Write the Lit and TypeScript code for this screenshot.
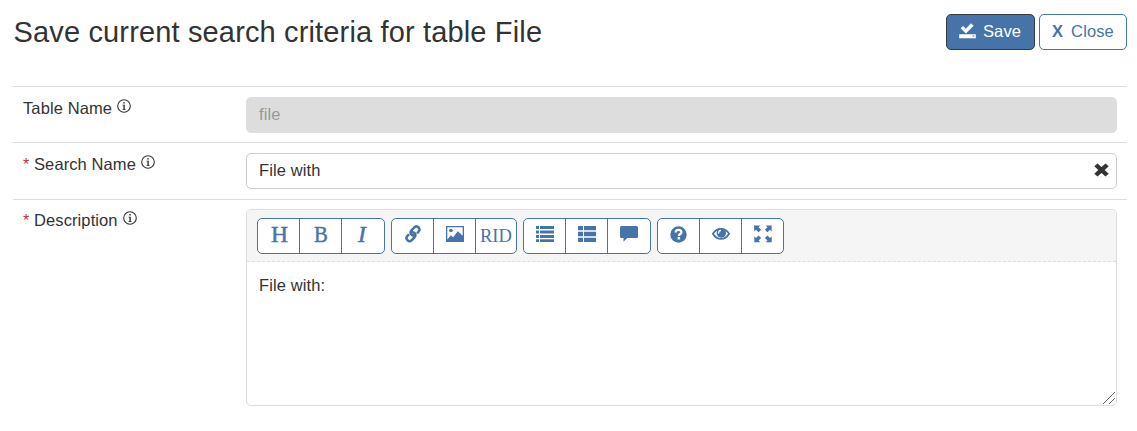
import { LitElement, html, css, svg } from "lit";
import { customElement } from "lit/decorators.js";

const icon = (w: number, h: number, body: unknown) =>
  html`<svg width=${w} height=${h} viewBox="0 0 ${w} ${h}" fill="currentColor">${body}</svg>`;

const icons = {
  save: icon(17, 16, svg`<path d="M1.6 5.300 4.100 3 6.900 5.700 12 .2 14.600 2.800 6.900 10.600Z"/><path fill-rule="evenodd" d="M.2 11.200h16.600v4H.2zM13.600 12.600v1h1.800v-1z"/>`),
  link: icon(18, 18, svg`<g fill="none" stroke="currentColor" stroke-width="2.500" stroke-linecap="round" stroke-linejoin="round"><path d="M10.800 10.500C8.600 10.700 6.600 9.600 6.500 7.600C6.500 6.700 6.900 6.100 7.500 5.400L10.200 2.500C11.500 1.200 13.200 1.200 14.500 2.500C15.800 3.800 15.700 5.400 14.500 6.800L13.700 7.600"/><path d="M7.500 7.200C9.700 7 11.400 8.200 11.500 10C11.500 10.900 11.100 11.600 10.500 12.300L7.800 15.100C6.500 16.400 4.700 16.400 3.400 15.100C2.100 13.800 2.200 12.200 3.400 10.900L4.300 10"/></g>`),
  image: icon(18, 16, svg`<path fill-rule="evenodd" d="M0 0h18v16H0zM1.300 1.300v12.200l3.600-4.300 2.200 2 4.700-6 4.900 4.500V1.300z"/><circle cx="4.900" cy="4.500" r="1.800"/>`),
  list: icon(18, 16, svg`<path d="M0 0h3v3H0zM4 0h14v3H4zM0 4.500h3v3H0zM4 4.500h14v3H4zM0 9h3v3H0zM4 9h14v3H4zM0 13.300h3v2.700H0zM4 13.300h14v2.700H4z"/>`),
  blocks: icon(18, 16, svg`<path d="M0 0h5v4.300H0zM6 0h12v4.300H6zM0 5.800h5v4.400H0zM6 5.800h12v4.400H6zM0 11.700h5V16H0zM6 11.700h12V16H6z"/>`),
  comment: icon(18, 16, svg`<path d="M1.500 0h15Q18 0 18 1.500v9q0 1.500-1.500 1.500H7.200L3.500 15.800V12h-2Q0 12 0 10.500v-9Q0 0 1.500 0z"/>`),
  help: icon(17, 17, svg`<circle cx="8.500" cy="8.500" r="8.200"/><path d="M5.700 6.500C5.700 4.600 6.900 3.800 8.500 3.800S11.400 4.800 11.400 6.300C11.400 8.100 8.900 8 8.900 10" fill="none" stroke="#fff" stroke-width="2.300"/><path fill="#fff" d="M7.600 11h2.500v2.400H7.600z"/>`),
  eye: icon(18, 14, svg`<path d="M.9 6.800C5 .2 13 .2 17.100 6.800 13 13.600 5 13.600.9 6.800Z" fill="none" stroke="currentColor" stroke-width="1.800"/><circle cx="9.300" cy="6" r="4.700"/><path d="M6.500 6.400C6.500 4.700 7.400 3.600 9 3.400" fill="none" stroke="#fff" stroke-width="1.300"/>`),
  expand: icon(18, 18, svg`<path d="M0 .5h6.300L4.600 2.200 7.200 4.800 4.600 7.200 2 4.700.3 6.400zM17.700.5v6L16 4.700 13.400 7.200 10.900 4.800 13.500 2.200 11.700.5zM.3 17.300v-6L2 13l2.600-2.500L7.200 13l-2.600 2.600 1.700 1.700zM17.700 17.300v-6L16 13l-2.600-2.500L10.900 13l2.600 2.600-1.800 1.700z"/>`),
  info: icon(14, 14, svg`<circle cx="7" cy="7" r="6.300" fill="none" stroke="currentColor" stroke-width="1.100"/><path d="M6.300 3h1.500v1.500H6.300zM5.500 5.700h2.300v4.600h.9v.8H5.500v-.8h.9V6.500h-.9z"/>`),
  clear: icon(15, 14, svg`<path d="M3.500.4 7.500 4 11.500.4 14.700 3.300 10.700 7 14.700 10.700 11.500 13.600 7.500 10 3.500 13.600.3 10.700 4.300 7 .3 3.300Z"/>`),
};

@customElement("app-root")
export class AppRoot extends LitElement {
  static styles = css`
    :host { display: block; height: 431px; overflow: hidden; background: #fff; color: #333;
      font: 16.500px/24px "Liberation Sans", Arial, sans-serif; letter-spacing: 0.100px; }
    * { box-sizing: border-box; }
    svg { display: block; flex: none; }
    .header { display: flex; height: 86px; padding: 14px 10px 0 13px; align-items: flex-start; }
    h1 { margin: 0; flex: 1; font-size: 29px; line-height: 36px; font-weight: 400; letter-spacing: 0.150px; padding-left: 0.500px; }
    .actions { display: flex; gap: 4px; }
    .btn { height: 36px; border: 1px solid #4674a8; border-radius: 5px; display: flex; padding: 0 0 2px 12px;
      align-items: center; font: inherit; background: #fff; color: #4674a8; }
    .save { width: 89px; background: #4674a8; border-color: #333b45; color: #fff; gap: 7px; }
    .close { width: 88px; gap: 8px; }
    .row { display: grid; grid-template-columns: 233px 871px; height: 56px; border-top: 1px solid #ddd;
      margin: 0 10px 0 13px; padding-top: 10px; }
    .row.middle { height: 57px; }
    .row.last { height: 220px; padding-top: 9px; }
    .label { display: flex; padding-left: 10px; height: 24px; line-height: 22px; }
    .label svg { margin: 2px 0 0 5px; }
    .req { color: #b5373b; width: 11px; font-size: 16px; line-height: 24px; }
    .field { height: 36px; border: 1px solid #ccc; border-radius: 5px; padding: 0 7px 2px 12px; display: flex;
      align-items: center; justify-content: space-between; }
    .disabled { background: #ddd; border-color: #ddd; color: #999; }
    .editor { height: 197px; border: 1px solid #ddd; border-radius: 5px; display: flex; flex-direction: column; overflow: hidden; }
    .toolbar { height: 52px; background: #f5f5f5; border-bottom: 1px dashed #ddd; padding: 8px 0 0 10px;
      display: flex; gap: 6px; flex: none; }
    .group { display: grid; grid-template-columns: 42px 42px 1fr; height: 36px; border: 1px solid #4674a8;
      border-radius: 5px; background: #fff; overflow: hidden; width: 128px; }
    .g2 { width: 126px; }
    .g4 { width: 127px; }
    .tool { display: flex; align-items: center; justify-content: center; color: #4674a8; padding: 0 1px 4px 1px;
      border-right: 1px solid #4674a8; font-family: "Liberation Serif", serif; }
    .tool:last-child { border-right: 0; }
    .letter { font-size: 23.500px; padding: 0 0 5px 2px; }
    .b { -webkit-text-stroke: 0.500px #4674a8; }
    .narrow { padding-left: 0; }
    .narrow span { display: block; transform: scaleX(0.880); }
    .group .i { font-style: italic; -webkit-text-stroke: 0.500px #4674a8; padding: 0 2px 5px 0; }
    .group .rid { font-size: 18.500px; padding: 0; }
    .text { flex: 1; padding: 11px 12px; display: flex; justify-content: space-between; }
    .grip { align-self: flex-end; margin: 0 -11px -10px 0; }
  `;

  render() {
    return html`
      <div class="header">
        <h1>Save current search criteria for table File</h1>
        <div class="actions">
          <div class="btn save">${icons.save}<span>Save</span></div>
          <div class="btn close"><b>X</b><span>Close</span></div>
        </div>
      </div>
      <div class="row">
        <div class="label">Table Name${icons.info}</div>
        <div class="field disabled">file</div>
      </div>
      <div class="row middle">
        <div class="label"><span class="req">*</span>Search Name${icons.info}</div>
        <div class="field"><span>File with</span>${icons.clear}</div>
      </div>
      <div class="row last">
        <div class="label"><span class="req">*</span>Description${icons.info}</div>
        <div class="editor">
          <div class="toolbar">
            <div class="group">
              <div class="tool letter b">H</div>
              <div class="tool letter b narrow"><span>B</span></div>
              <div class="tool letter i">I</div>
            </div>
            <div class="group g2">
              <div class="tool">${icons.link}</div>
              <div class="tool">${icons.image}</div>
              <div class="tool rid">RID</div>
            </div>
            <div class="group">
              <div class="tool">${icons.list}</div>
              <div class="tool">${icons.blocks}</div>
              <div class="tool">${icons.comment}</div>
            </div>
            <div class="group g4">
              <div class="tool">${icons.help}</div>
              <div class="tool">${icons.eye}</div>
              <div class="tool">${icons.expand}</div>
            </div>
          </div>
          <div class="text">
            <span>File with:</span>
            <svg class="grip" width="12" height="12" viewBox="0 0 12 12" fill="none" stroke="#666" stroke-width="1">
              <path d="M0 12 12 0M6 12 12 6" />
            </svg>
          </div>
        </div>
      </div>
    `;
  }
}
